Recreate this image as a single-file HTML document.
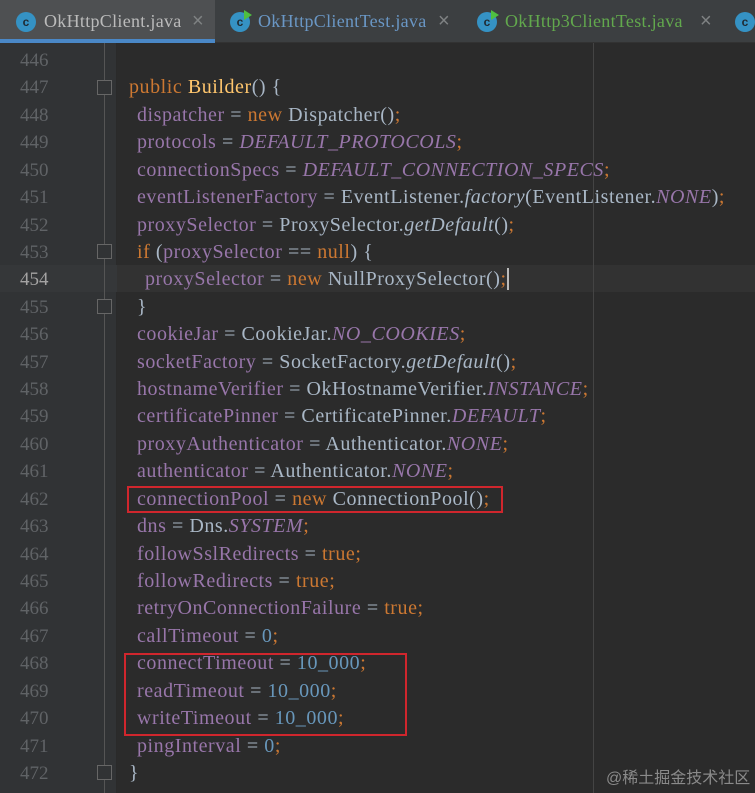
<!DOCTYPE html>
<html><head><meta charset="utf-8"><style>
*{margin:0;padding:0;box-sizing:border-box}
body{width:755px;height:793px;overflow:hidden;background:#2b2b2b;font-family:"Liberation Serif","Noto Serif CJK SC",serif;position:relative}
#tabs{position:absolute;left:0;top:0;width:755px;height:43px;background:#3c3f41;border-bottom:1px solid #323232}
.tab{position:absolute;top:0;height:43px;font-size:18px;line-height:43px;letter-spacing:0.3px}
.ic{position:absolute;top:12px;width:20px;height:20px;border-radius:50%;background:#3592c4;color:#1f2a33;font:bold 12px "Liberation Sans",sans-serif;text-align:center;line-height:20px}
.x{position:absolute;top:0;color:#7f8283;font:20px "Liberation Sans",sans-serif;line-height:43px}
#gut{position:absolute;left:0;top:43px;width:117px;height:750px;background:#313335;border-right:1px solid #2a2a2a}
.fold{position:absolute;left:104px;width:1px;background:#555}
.ln{position:absolute;left:20px;width:40px;color:#606366;font-size:19px}
.cl{position:absolute;white-space:pre;font-size:20px;letter-spacing:0.55px;color:#a9b7c6}
.f{color:#9876aa}.k{color:#cc7832}.y{color:#ffc66d}.n{color:#6897bb}.i{font-style:italic}.s{color:#9876aa;font-style:italic}
.box{position:absolute;border:2px solid #d0262d}
.fm{position:absolute;left:97px;width:15px;height:15px;border:1px solid #666;background:#313335}
</style></head><body>
<div id="tabs">
 <div style="position:absolute;left:0;top:0;width:215px;height:43px;background:#4e5052"></div>
 <div style="position:absolute;left:0;top:39px;width:215px;height:4px;background:#4a88c7"></div>
 <div class="ic" style="left:16px">c</div>
 <div class="tab" style="left:44px;color:#bbbbbb">OkHttpClient.java</div>
 <div class="x" style="left:192px">×</div>
 <div class="ic" style="left:230px">c</div><div style="position:absolute;left:244px;top:10px;width:0;height:0;border-left:8px solid #4fbf40;border-top:5px solid transparent;border-bottom:5px solid transparent"></div>
 <div class="tab" style="left:258px;color:#6a97c5">OkHttpClientTest.java</div>
 <div class="x" style="left:438px">×</div>
 <div class="ic" style="left:477px">c</div><div style="position:absolute;left:491px;top:10px;width:0;height:0;border-left:8px solid #4fbf40;border-top:5px solid transparent;border-bottom:5px solid transparent"></div>
 <div class="tab" style="left:505px;color:#62a84d">OkHttp3ClientTest.java</div>
 <div class="x" style="left:700px">×</div>
 <div class="ic" style="left:735px">c</div>
</div>
<div id="gut"></div>
<div style="position:absolute;left:117px;top:265px;width:638px;height:27px;background:#323232"></div>
<div style="position:absolute;left:0;top:265px;width:117px;height:27px;background:#353739"></div>
<div class="fold" style="top:43px;height:750px"></div>
<div style="position:absolute;left:593px;top:43px;width:1px;height:750px;background:#444"></div>
<div class="fm" style="top:80px"></div><div class="fm" style="top:244px"></div><div class="fm" style="top:299px"></div><div class="fm" style="top:765px"></div>
<div id="lines"></div>
<script>
var L=[
["",""],
["","<span class=k>public</span> <span class=y>Builder</span>() {",129],
["","<span class=f>dispatcher</span> = <span class=k>new</span> Dispatcher()<span class=k>;</span>"],
["","<span class=f>protocols</span> = <span class=s>DEFAULT_PROTOCOLS</span><span class=k>;</span>"],
["","<span class=f>connectionSpecs</span> = <span class=s>DEFAULT_CONNECTION_SPECS</span><span class=k>;</span>"],
["","<span class=f>eventListenerFactory</span> = EventListener.<span class=i>factory</span>(EventListener.<span class=s>NONE</span>)<span class=k>;</span>"],
["","<span class=f>proxySelector</span> = ProxySelector.<span class=i>getDefault</span>()<span class=k>;</span>"],
["","<span class=k>if</span> (<span class=f>proxySelector</span> == <span class=k>null</span>) {"],
["","<span class=f>proxySelector</span> = <span class=k>new</span> NullProxySelector()<span class=k>;</span><span style='border-left:2px solid #bbb'></span>",145],
["","}"],
["","<span class=f>cookieJar</span> = CookieJar.<span class=s>NO_COOKIES</span><span class=k>;</span>"],
["","<span class=f>socketFactory</span> = SocketFactory.<span class=i>getDefault</span>()<span class=k>;</span>"],
["","<span class=f>hostnameVerifier</span> = OkHostnameVerifier.<span class=s>INSTANCE</span><span class=k>;</span>"],
["","<span class=f>certificatePinner</span> = CertificatePinner.<span class=s>DEFAULT</span><span class=k>;</span>"],
["","<span class=f>proxyAuthenticator</span> = Authenticator.<span class=s>NONE</span><span class=k>;</span>"],
["","<span class=f>authenticator</span> = Authenticator.<span class=s>NONE</span><span class=k>;</span>"],
["","<span class=f>connectionPool</span> = <span class=k>new</span> ConnectionPool()<span class=k>;</span>"],
["","<span class=f>dns</span> = Dns.<span class=s>SYSTEM</span><span class=k>;</span>"],
["","<span class=f>followSslRedirects</span> = <span class=k>true;</span>"],
["","<span class=f>followRedirects</span> = <span class=k>true;</span>"],
["","<span class=f>retryOnConnectionFailure</span> = <span class=k>true;</span>"],
["","<span class=f>callTimeout</span> = <span class=n>0</span><span class=k>;</span>"],
["","<span class=f>connectTimeout</span> = <span class=n>10_000</span><span class=k>;</span>"],
["","<span class=f>readTimeout</span> = <span class=n>10_000</span><span class=k>;</span>"],
["","<span class=f>writeTimeout</span> = <span class=n>10_000</span><span class=k>;</span>"],
["","<span class=f>pingInterval</span> = <span class=n>0</span><span class=k>;</span>"],
["","}",129]];
var h="";
for(var j=0;j<L.length;j++){var t=50+j*27.42;var n=446+j;
h+='<div class="ln" style="top:'+t+'px;'+(n==454?'color:#a4a3a3':'')+'">'+n+'</div>';
h+='<div class="cl" style="top:'+(t-1)+'px;left:'+(L[j][2]||137)+'px">'+L[j][1]+'</div>';}
document.getElementById('lines').innerHTML=h;
</script>
<div class="box" style="left:127px;top:486px;width:376px;height:27px"></div>
<div class="box" style="left:124px;top:653px;width:283px;height:83px"></div>
<div style="position:absolute;left:606px;top:764px;font-size:16px;white-space:nowrap;color:#8a8a8a;font-family:'Liberation Sans','Noto Sans CJK SC',sans-serif">@稀土掘金技术社区</div>
</body></html>
